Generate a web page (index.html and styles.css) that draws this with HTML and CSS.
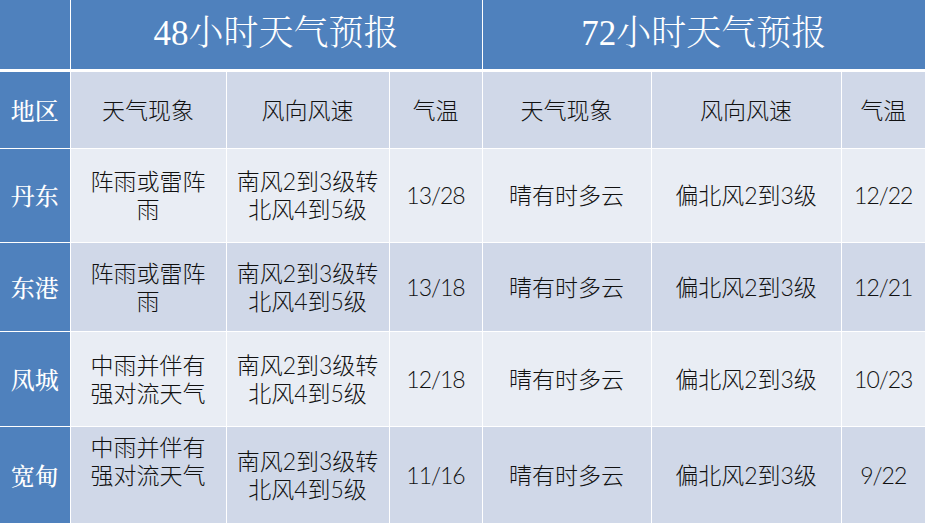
FILE: index.html
```html
<!DOCTYPE html>
<html lang="zh-CN">
<head>
<meta charset="utf-8">
<title>天气预报</title>
<link rel="stylesheet" href="styles.css">
</head>
<body>
<table class="forecast">
  <colgroup>
    <col class="c-area">
    <col class="c-wx1">
    <col class="c-wind1">
    <col class="c-temp1">
    <col class="c-wx2">
    <col class="c-wind2">
    <col class="c-temp2">
  </colgroup>
  <thead>
    <tr class="row-title">
      <th class="area"></th>
      <th class="title" colspan="3">48小时天气预报</th>
      <th class="title" colspan="3">72小时天气预报</th>
    </tr>
    <tr class="row-head">
      <th class="area">地区</th>
      <th>天气现象</th>
      <th>风向风速</th>
      <th>气温</th>
      <th>天气现象</th>
      <th>风向风速</th>
      <th>气温</th>
    </tr>
  </thead>
  <tbody>
    <tr class="row-light row-h93">
      <th class="area">丹东</th>
      <td>阵雨或雷阵<br>雨</td>
      <td>南风2到3级转<br>北风4到5级</td>
      <td class="temp">13/28</td>
      <td>晴有时多云</td>
      <td>偏北风2到3级</td>
      <td class="temp">12/22</td>
    </tr>
    <tr class="row-dark row-h88">
      <th class="area">东港</th>
      <td>阵雨或雷阵<br>雨</td>
      <td>南风2到3级转<br>北风4到5级</td>
      <td class="temp">13/18</td>
      <td>晴有时多云</td>
      <td>偏北风2到3级</td>
      <td class="temp">12/21</td>
    </tr>
    <tr class="row-light row-h94">
      <th class="area">凤城</th>
      <td>中雨并伴有<br>强对流天气</td>
      <td>南风2到3级转<br>北风4到5级</td>
      <td class="temp">12/18</td>
      <td>晴有时多云</td>
      <td>偏北风2到3级</td>
      <td class="temp">10/23</td>
    </tr>
    <tr class="row-dark row-h96">
      <th class="area">宽甸</th>
      <td class="raised">中雨并伴有<br>强对流天气</td>
      <td>南风2到3级转<br>北风4到5级</td>
      <td class="temp">11/16</td>
      <td>晴有时多云</td>
      <td>偏北风2到3级</td>
      <td class="temp">9/22</td>
    </tr>
  </tbody>
</table>
</body>
</html>
```

FILE: styles.css
```css
html, body {
  margin: 0;
  padding: 0;
  background: #ffffff;
}

body {
  width: 925px;
  height: 523px;
  overflow: hidden;
}

.forecast {
  width: 925px;
  table-layout: fixed;
  border-collapse: collapse;
  font-family: "Lato", "Noto Sans CJK SC", "Noto Sans", sans-serif;
  font-size: 23px;
  line-height: 28px;
  color: #111111;
}

.c-area  { width: 70px; }
.c-wx1   { width: 156px; }
.c-wind1 { width: 163px; }
.c-temp1 { width: 93px; }
.c-wx2   { width: 169px; }
.c-wind2 { width: 190px; }
.c-temp2 { width: 84px; }

.forecast th,
.forecast td {
  border: 1px solid #ffffff;
  padding: 0 4px;
  text-align: center;
  vertical-align: middle;
  font-weight: 300;
  white-space: nowrap;
}

.forecast tr:first-child th {
  border-top: 0;
}

.forecast th:first-child {
  border-left: 0;
}

.forecast th:last-child,
.forecast td:last-child {
  border-right: 0;
}

.row-title {
  height: 70px;
  background: #4f81bd;
}

.row-title th {
  border-bottom: 3px solid #ffffff;
}

.title {
  font-family: "Liberation Serif", "Noto Serif CJK SC", "Noto Sans CJK SC", serif;
  font-size: 35px;
  line-height: 40px;
  font-weight: 400;
  color: #ffffff;
  padding-top: 4px;
}

.row-head {
  height: 78px;
  background: #d0d8e8;
}

.row-light { background: #e9edf4; }
.row-dark  { background: #d0d8e8; }

.row-h93 { height: 94px; }
.row-h88 { height: 89px; }
.row-h94 { height: 95px; }
.row-h96 { height: 97px; }

.forecast .area {
  background: #4f81bd;
  color: #ffffff;
  font-size: 24px;
  font-weight: 500;
  font-family: "Noto Serif CJK SC", "Noto Sans CJK SC", sans-serif;
  line-height: 36px;
  padding: 0;
}

.temp {
  letter-spacing: -1px;
}

.raised {
  padding-bottom: 28px !important;
}
```
